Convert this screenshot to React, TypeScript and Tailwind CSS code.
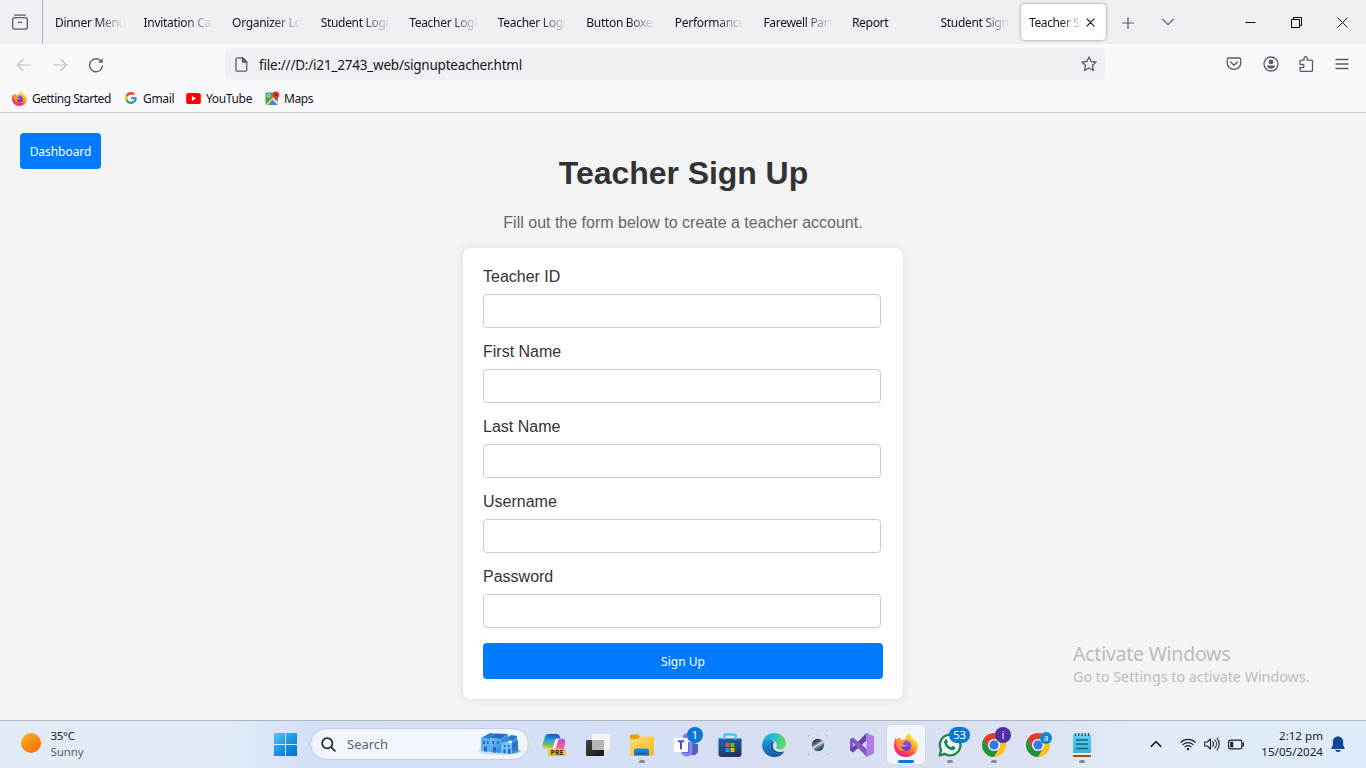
import React from "react";

const TABS = [
  "Dinner Menu",
  "Invitation Card",
  "Organizer Login",
  "Student Login",
  "Teacher Login",
  "Teacher Login",
  "Button Boxes",
  "Performance",
  "Farewell Party",
  "Report",
  "Student Sign Up",
];

const FIELDS = ["Teacher ID", "First Name", "Last Name", "Username", "Password"];

const fade = "[mask-image:linear-gradient(to_right,black_60%,transparent)]";

function FirefoxIcon({ className, id }: { className: string; id: string }) {
  return (
    <svg viewBox="0 0 24 24" className={className}>
      <defs>
        <linearGradient id={`${id}a`} x1="0.85" y1="0.1" x2="0.2" y2="0.95">
          <stop offset="0" stopColor="#fff44f" />
          <stop offset="0.35" stopColor="#ffb01f" />
          <stop offset="0.6" stopColor="#ff5a36" />
          <stop offset="1" stopColor="#f0149a" />
        </linearGradient>
        <linearGradient id={`${id}b`} x1="0.6" y1="0" x2="0.4" y2="1">
          <stop offset="0" stopColor="#a254e8" />
          <stop offset="1" stopColor="#4f3ec8" />
        </linearGradient>
      </defs>
      <path
        d="M22.6 8.6c-.5-1.2-1.500-2.500-2.300-2.900.6 1.200 1 2.500 1.100 3.400C20.100 5.900 17.900 4.600 16.100 1.800 15.600 1 15.200.4 15.100.1c-2.800 1.600-3.800 4.700-3.900 6.200-1.300.1-2.600.6-3.600 1.300C6 6.700 6 4.600 6 4.300 4.600 5 3.400 6.100 2.700 7c-.5-.6-.5-2.700-.4-3.100C1.500 4.500.7 6.900.4 9.600.1 10.700 0 11.900 0 12.900 0 19 5.300 24 11.900 24 18 24 23.100 19.700 23.900 13.900c.2-2-.3-3.900-1.300-5.300z"
        fill={`url(#${id}a)`}
      />
      <circle cx="12.200" cy="12.600" r="5.300" fill={`url(#${id}b)`} />
      <path
        d="M2.500 7.500c2.100-1.200 3.700-.9 4.800.1 1.200-.2 2.700 0 3.800.8-.2 1.200-1.700 1.700-2.900 2.200.1.700 1.200 1.300 2.400 1.500.9.100 1.700-.2 2.400 0-.6 1-2 1.700-3.300 1.700-1.200.1-2.300-.3-3.200-1 .4 2.600 2.400 4.600 5.300 5-5 1.300-10-3-9.300-10.300z"
        fill="#ff9a2e"
      />
    </svg>
  );
}

function GoogleIcon() {
  return (
    <svg viewBox="0 0 48 48" className="h-3 w-3">
      <path fill="#EA4335" d="M24 9.500c3.540 0 6.710 1.220 9.210 3.600l6.850-6.850C35.900 2.380 30.470 0 24 0 14.620 0 6.510 5.380 2.560 13.220l7.980 6.190C12.430 13.720 17.740 9.500 24 9.500z" />
      <path fill="#4285F4" d="M46.980 24.550c0-1.570-.15-3.090-.38-4.550H24v9.020h12.940c-.58 2.960-2.260 5.480-4.780 7.180l7.730 6c4.510-4.180 7.090-10.360 7.090-17.650z" />
      <path fill="#FBBC05" d="M10.530 28.590c-.48-1.450-.76-2.990-.76-4.590s.27-3.140.76-4.590l-7.980-6.190C.92 16.460 0 20.120 0 24c0 3.880.92 7.540 2.560 10.780l7.970-6.190z" />
      <path fill="#34A853" d="M24 48c6.480 0 11.930-2.130 15.890-5.810l-7.730-6c-2.150 1.450-4.920 2.300-8.160 2.300-6.260 0-11.570-4.220-13.470-9.910l-7.980 6.190C6.510 42.620 14.620 48 24 48z" />
    </svg>
  );
}

function MapsIcon() {
  return (
    <svg viewBox="0 0 15 15" className="h-[15px] w-[15px]">
      <path d="M1.500 1.500H13V13a1 1 0 0 1-1 1H1.500a1 1 0 0 1-1-1V2.500a1 1 0 0 1 1-1z" fill="#3f9f5b" />
      <path d="M5.500 9.300L8.500 6.300 13 10.800V13.500L12.500 14H3z" fill="#dfe3e8" />
      <path d="M7.300 8.500l5.400 5.500H2.500z" fill="#4285f4" />
      <path d="M0.600 13.200L9.300 4.500l1.400 1.400L2.600 14H1.400z" fill="#fbc934" />
      <circle cx="3.700" cy="4.700" r="1.600" fill="none" stroke="#dff1e3" strokeWidth="1" />
      <path d="M11 10.200C10.700 7.700 7.700 6.600 7.700 3.700a3.300 3.300 0 0 1 6.600 0C14.300 6.600 11.300 7.700 11 10.200z" fill="#dc3b30" />
      <circle cx="11" cy="3.700" r="1.200" fill="#7d1a14" />
    </svg>
  );
}

function TabStrip() {
  return (
    <div className="flex h-11 bg-[#f0eff4] text-[12px] tracking-[-0.300px] text-[#15141a]">
      <div className="flex w-[43px] items-center justify-center border-r border-[#aeadb4] pr-[2px]">
        <svg viewBox="0 0 16 16" className="h-4 w-4" fill="none" stroke="#5b5b66" strokeWidth="1.300" strokeLinecap="round">
          <path d="M2.700 1.100h10.600" />
          <rect x="0.700" y="3.700" width="14.600" height="11.500" rx="2" />
          <path d="M6.300 8.300h3.400" />
        </svg>
      </div>
      <div className="flex w-[1063px] gap-[3.560px] pl-1">
        {TABS.map((t, i) => (
          <div key={i} className="flex w-[85px] shrink-0 items-center px-2 pt-[2px]">
            <span className={`block w-[69px] overflow-hidden whitespace-nowrap ${t === "Report" ? "" : fade}`}>{t}</span>
          </div>
        ))}
        <div className="my-1 flex w-[85px] shrink-0 items-center rounded bg-white pl-2 shadow-[0_0_3px_rgba(0,0,0,0.45)]">
          <span className={`block w-[53px] overflow-hidden whitespace-nowrap pt-[2px] tracking-[-0.400px] ${fade}`}>Teacher Sign Up</span>
          <svg viewBox="0 0 10 10" className="ml-[4px] h-[9px] w-[9px]" stroke="#15141a" strokeWidth="1.200" strokeLinecap="round">
            <path d="M1 1l8 8M9 1l-8 8" />
          </svg>
        </div>
      </div>
      <div className="flex flex-1 items-center text-[#5b5b66]">
        <svg viewBox="0 0 12 12" className="ml-[15.500px] mt-px h-3 w-3" stroke="currentColor" strokeWidth="1.200" strokeLinecap="round">
          <path d="M6 .6v10.800M.6 6h10.800" />
        </svg>
        <svg viewBox="0 0 12 8" className="ml-[28.500px] h-2 w-3" fill="none" stroke="currentColor" strokeWidth="1.200" strokeLinecap="round" strokeLinejoin="round">
          <path d="M.6 1.200L6 6.600l5.400-5.400" />
        </svg>
        <svg viewBox="0 0 11 11" className="ml-[71px] h-[11px] w-[11px]" stroke="#000" strokeWidth="1">
          <path d="M.5 5.500h10" />
        </svg>
        <svg viewBox="0 0 11 11" className="ml-[35px] h-[11px] w-[11px]" fill="none" stroke="#000" strokeWidth="1">
          <path d="M.5 2.500h8v8h-8zM2.500 2.500v-2h8v8h-2" />
        </svg>
        <svg viewBox="0 0 11 11" className="ml-[35px] h-[11px] w-[11px]" stroke="#000" strokeWidth="0.900">
          <path d="M.5 .5l10 10M10.500 .5l-10 10" />
        </svg>
      </div>
    </div>
  );
}

function NavBar() {
  return (
    <div className="flex h-10 items-center bg-[#f9f9fb] text-[#5b5b66]">
      <svg viewBox="0 0 16 16" className="mb-[-1px] ml-4 h-4 w-4" fill="none" stroke="#bfbfc5" strokeWidth="1.200" strokeLinecap="round" strokeLinejoin="round">
        <path d="M14.500 8H1.500M7 2.500L1.500 8 7 13.500" />
      </svg>
      <svg viewBox="0 0 16 16" className="mb-[-1px] ml-5 h-4 w-4" fill="none" stroke="#bfbfc5" strokeWidth="1.200" strokeLinecap="round" strokeLinejoin="round">
        <path d="M1.500 8h13M9 2.500L14.500 8 9 13.500" />
      </svg>
      <svg viewBox="0 0 16 16" className="mb-[-1px] ml-5 h-4 w-4" fill="none" stroke="currentColor" strokeWidth="1.300" strokeLinecap="round">
        <path d="M13.200 4.300A6.500 6.500 0 1 0 14.500 8.800" />
        <path d="M14.700 1.200v4.600h-4.600z" fill="currentColor" stroke="none" />
      </svg>
      <div className="ml-[121px] flex h-8 w-[880px] items-center rounded bg-[#f0eff4]">
        <svg viewBox="0 0 13 15" className="ml-[10px] h-[15px] w-[13px]" fill="none" stroke="currentColor" strokeWidth="1.300" strokeLinejoin="round">
          <path d="M2.500 .8h5l4.200 4.200v7.700a1.500 1.500 0 0 1-1.500 1.500H2.500A1.500 1.500 0 0 1 1 12.700V2.300A1.500 1.500 0 0 1 2.500 .8z" />
          <path d="M7.500 .8V5h4.200z" fill="currentColor" />
        </svg>
        <span className="ml-[11px] flex-1 whitespace-nowrap pt-[2px] text-[13.500px] tracking-[-0.210px] text-[#15141a]">file:///D:/i21_2743_web/signupteacher.html</span>
        <svg viewBox="0 0 16 16" className="mr-2 h-4 w-4" fill="none" stroke="currentColor" strokeWidth="1.300" strokeLinejoin="round">
          <path d="M8 .9l2.100 4.600 5 .6-3.700 3.400 1 5L8 12l-4.400 2.500 1-5L.9 6.100l5-.6z" />
        </svg>
      </div>
      <svg viewBox="0 0 16 16" className="ml-[121px] h-4 w-4" fill="none" stroke="currentColor" strokeWidth="1.300" strokeLinecap="round" strokeLinejoin="round">
        <path d="M2.600 2h10.800a1.300 1.300 0 0 1 1.300 1.300v3.900a6.700 6.200 0 0 1-13.400 0V3.300A1.300 1.300 0 0 1 2.600 2z" />
        <path d="M4.700 6L8 9.200 11.300 6" />
      </svg>
      <svg viewBox="0 0 16 16" className="ml-[20.500px] h-4 w-4" fill="none" stroke="currentColor" strokeWidth="1.300">
        <circle cx="8" cy="8" r="7" />
        <circle cx="8" cy="5.900" r="2.400" fill="currentColor" stroke="none" />
        <path d="M3.900 9.500h8.200c-.3 2-1.800 3.300-4.100 3.300s-3.800-1.300-4.100-3.300z" fill="currentColor" stroke="none" />
      </svg>
      <svg viewBox="0 0 16 16" className="ml-[19.500px] h-4 w-4" fill="none" stroke="currentColor" strokeWidth="1.300" strokeLinejoin="round">
        <path d="M2 5.200a1 1 0 0 1 1-1h3V2.300a1.600 1.600 0 0 1 3.200 0v1.900H13.500a1 1 0 0 1 1 1v9.200a1 1 0 0 1-1 1H3a1 1 0 0 1-1-1v-2.700h2.400a1.500 1.500 0 0 0 0-3.200H2z" />
      </svg>
      <svg viewBox="0 0 16 16" className="ml-[20px] h-4 w-4" stroke="currentColor" strokeWidth="1.300" strokeLinecap="round">
        <path d="M2 3.500h12M2 8h12M2 12.500h12" />
      </svg>
    </div>
  );
}

function Bookmarks() {
  return (
    <div className="flex h-[29px] items-center border-b border-[#cccccc] bg-[#f9f9fb] pl-3 text-[12px] tracking-[-0.350px] text-[#15141a]">
      <FirefoxIcon id="bm" className="h-[15px] w-[15px]" />
      <span className="ml-[5px] w-[80px] whitespace-nowrap pt-[2px] tracking-[-0.500px]">Getting Started</span>
      <span className="ml-[13px]"><GoogleIcon /></span>
      <span className="ml-[6px] w-[31px] whitespace-nowrap pt-[2px]">Gmail</span>
      <svg viewBox="0 0 16 12" className="ml-[12px] h-[11px] w-[15px]">
        <rect width="16" height="12" rx="2.800" fill="#f00" />
        <path d="M6.200 3.300v5.400L11 6z" fill="#fff" />
      </svg>
      <span className="ml-[5px] w-[46px] whitespace-nowrap pt-[2px]">YouTube</span>
      <span className="ml-[13px]"><MapsIcon /></span>
      <span className="ml-[4px] pt-[2px] tracking-[-0.450px]">Maps</span>
    </div>
  );
}

function Page() {
  return (
    <div className="relative flex h-[607px] flex-col items-center bg-[#f4f4f4] font-['Liberation_Sans',Arial,sans-serif]">
      <button className="absolute left-5 top-5 h-9 w-[81px] rounded bg-[#007bff] pt-[2px] font-['Noto_Sans',sans-serif] text-[12px] tracking-[-0.050px] text-white">Dashboard</button>
      <h1 className="mt-[42px] pl-px text-[32px] leading-[37px] font-bold tracking-[-0.050px] text-[#333]">Teacher Sign Up</h1>
      <p className="mt-[22px] text-base leading-[18px] text-[#666]">Fill out the form below to create a teacher account.</p>
      <form className="mt-[16px] w-[440px] rounded-lg bg-white p-5 shadow-[0_0_10px_rgba(0,0,0,0.1)]">
        {FIELDS.map((f) => (
          <div key={f} className="mb-[15px]">
            <label className="mb-2 block text-base leading-[18px] text-[#333]">{f}</label>
            <input className="block h-[34px] w-[398px] rounded border border-[#ccc] bg-white" />
          </div>
        ))}
        <button className="block h-9 w-full rounded bg-[#007bff] pt-[2px] font-['Noto_Sans',sans-serif] text-[12px] text-white">Sign Up</button>
      </form>
      <div className="absolute left-[1073px] top-[527px] whitespace-nowrap font-['Noto_Sans',sans-serif] text-[#bcbcbc]">
        <div className="text-[19.500px] leading-[27px] tracking-[-0.240px]">Activate Windows</div>
        <div className="text-[14.300px] leading-[19px] tracking-[-0.010px]">Go to Settings to activate Windows.</div>
      </div>
    </div>
  );
}

function Cell({ children, active, dot }: { children: React.ReactNode; active?: boolean; dot?: boolean }) {
  return (
    <div className="relative flex h-12 w-11 shrink-0 items-center justify-center pt-px">
      <div className={`flex h-[39px] w-[38px] items-center justify-center rounded ${active ? "bg-[#f2f5fc] shadow-[0_0_1px_rgba(0,0,0,0.2)]" : ""}`}>{children}</div>
      {active && <span className="absolute bottom-[5px] left-[14px] h-[3px] w-4 rounded-full bg-[#0878d4]" />}
      {dot && <span className="absolute bottom-[5px] left-[19px] h-[3px] w-[6px] rounded-full bg-[#858990]" />}
    </div>
  );
}

function Badge({ children, className }: { children: React.ReactNode; className: string }) {
  return <span className={`absolute flex items-center justify-center rounded-full text-white ${className}`}>{children}</span>;
}

function ChromeIcon() {
  return (
    <svg viewBox="0 0 24 24" className="h-6 w-6">
      <circle cx="12" cy="12" r="12" fill="#fcc31e" />
      <path d="M1.608 6A12 12 0 0 1 22.392 6L12 6 6.804 15z" fill="#e33b2e" />
      <path d="M1.608 6A12 12 0 0 0 12 24L17.196 15 12 18 6.804 15z" fill="#229342" />
      <circle cx="12" cy="12" r="6" fill="#fff" />
      <circle cx="12" cy="12" r="4.700" fill="#3478ec" />
    </svg>
  );
}

function CopilotIcon() {
  return (
    <svg viewBox="0 0 24 24" className="h-6 w-6">
      <defs>
        <linearGradient id="cpa" x1="0.500" y1="0" x2="0.300" y2="1">
          <stop offset="0" stopColor="#1757c8" />
          <stop offset="0.450" stopColor="#23a8d8" />
          <stop offset="0.750" stopColor="#6cc25a" />
          <stop offset="1" stopColor="#f2ce20" />
        </linearGradient>
        <linearGradient id="cpb" x1="0.700" y1="0" x2="0.300" y2="1">
          <stop offset="0" stopColor="#a858e8" />
          <stop offset="0.500" stopColor="#e9589a" />
          <stop offset="1" stopColor="#fb8450" />
        </linearGradient>
      </defs>
      <path d="M6.500 1h8.200c1.800 0 2.700 1.300 3.200 3l.5 1.700h-3.300c-1.900 0-2.700 1.300-3.200 3L10 15.500H3.600C.8 15.500 0 13.200.7 10.700L3 3.700C3.600 1.900 4.700 1 6.500 1z" fill="url(#cpa)" />
      <path d="M15.500 5.700h4.700c2.800 0 3.600 2.100 2.900 4.500L21.500 17H9.500l2.900-8.900c.6-1.600 1.400-2.400 3.100-2.400z" fill="url(#cpb)" />
      <path d="M13.300 7l-3 9h3.300l2.600-8.400c.3-1 .8-1.500 1.600-1.900h-2.500c-1 0-1.700.4-2 1.300z" fill="#f6eafd" />
    </svg>
  );
}

function SearchArt() {
  return (
    <svg viewBox="0 0 44 24" className="h-6 w-11">
      <defs>
        <linearGradient id="sa" x1="0" y1="0" x2="1" y2="1">
          <stop offset="0" stopColor="#7cc6ff" />
          <stop offset="1" stopColor="#2f85dc" />
        </linearGradient>
      </defs>
      <ellipse cx="22" cy="19" rx="21.500" ry="3.800" fill="#c3dcf5" />
      <path d="M3 6l9 1v13l-9-1.500z" fill="#5fb0f4" />
      <path d="M3 6l9-5 8 1-8 5z" fill="#2f7fd0" />
      <path d="M12 6l11 1v14l-11-1z" fill="url(#sa)" />
      <path d="M12 6l6-4.500L30 2l-7 5z" fill="#2770c2" />
      <path d="M23 7l7-5v8l-7 3z" fill="#3a8fe4" />
      <path d="M30 9V5.500l9-1.500v13l-5 3V9z" fill="#4595e6" />
      <path d="M29 6l4-3 6 1-4 4z" fill="#2a74c6" />
      <path d="M23 11l4-1 7 1v11l-11-1z" fill="#78c0fa" />
      <path d="M34 11l6-3v11l-6 3z" fill="#2d78cc" />
      <path d="M5 9h2v3H5zM9 9h1.500v3H9zM14.500 9h1.500v3h-1.500zM19 9h1.500v3H19zM26 13h1.500v2H26zM30 13h1.500v2H30zM36 12h1.500v3H36z" fill="#1f66b4" />
      <path d="M6 14.500h3v5H6zM15 15h3v5.500h-3zM25.500 17h2v4.500h-2zM30 16.500h2.500V22H30z" fill="#276fbf" />
      <path d="M34 20.500l2-2.500 2 1.500 2-2 1.500 2-3.500 2z" fill="#4c9fbd" />
    </svg>
  );
}

function Taskbar() {
  return (
    <div className="flex h-12 bg-[linear-gradient(90deg,#e1ecf6_0%,#e0ebf7_17%,#d2e0f8_23%,#d5dff6_45%,#d8dff2_62%,#dce2f1_76%,#e2ecf8_84%,#dfebf9_100%)] font-['Noto_Sans',sans-serif] text-[#1f2124] shadow-[inset_0_1px_0_#adb4be]">
      <div className="flex w-[263px] items-center pl-[21px]">
        <span className="mb-[2px] h-5 w-5 rounded-full bg-[linear-gradient(140deg,#f4bd2a,#f5780a_75%)]" />
        <div className="ml-[9.500px] text-[11.500px] leading-4">
          <div className="tracking-[-0.300px]">35°C</div>
          <div className="tracking-[-0.100px] text-[#5d6268]">Sunny</div>
        </div>
      </div>
      <Cell>
        <svg viewBox="0 0 23 23" className="h-[23px] w-[23px]">
          <defs>
            <linearGradient id="win" gradientUnits="userSpaceOnUse" x1="0" y1="0" x2="20" y2="23">
              <stop offset="0" stopColor="#4ccbfa" />
              <stop offset="0.600" stopColor="#1490df" />
              <stop offset="1" stopColor="#0473d0" />
            </linearGradient>
          </defs>
          <path d="M0 0h11v11H0zM12 0h11v11H12zM0 12h11v11H0zM12 12h11v11H12z" fill="url(#win)" />
        </svg>
      </Cell>
      <div className="mt-2 ml-[3px] flex h-8 w-[219px] items-center rounded-full border border-[#c0cde2] bg-[#f1f6fe] pl-[10px]">
        <svg viewBox="0 0 16 16" className="h-[15px] w-[15px]" fill="none" stroke="#24272b" strokeWidth="1.800" strokeLinecap="round">
          <circle cx="6.700" cy="6.700" r="5.500" />
          <path d="M10.800 10.800l4 4" />
        </svg>
        <span className="ml-[11px] flex-1 pt-px text-[13px] text-[#5c6066]">Search</span>
        <span className="mr-[6px]"><SearchArt /></span>
      </div>
      <div className="ml-[3px] flex">
        <Cell>
          <CopilotIcon />
          <span className="absolute left-[16px] top-[29px] flex h-[7px] w-[18px] items-center justify-center rounded-[1px] bg-[#f7c60c] text-[7px] leading-none font-bold text-[#241f10]">PRE</span>
        </Cell>
        <Cell>
          <svg viewBox="0 0 24 24" className="h-6 w-6">
            <defs>
              <linearGradient id="tva" x1="0" y1="0" x2="1" y2="1">
                <stop offset="0" stopColor="#454545" />
                <stop offset="1" stopColor="#161616" />
              </linearGradient>
            </defs>
            <rect x="0" y="7" width="18" height="16" rx="1" fill="url(#tva)" />
            <rect x="6" y="1" width="18" height="16" rx="1" fill="#f4f4f4" />
            <rect x="6" y="7" width="12" height="10" fill="#b5b5b5" />
          </svg>
        </Cell>
        <Cell dot>
          <svg viewBox="0 0 24 24" className="h-6 w-6">
            <defs>
              <linearGradient id="fea" x1="0" y1="0" x2="1" y2="1">
                <stop offset="0" stopColor="#ffdf78" />
                <stop offset="1" stopColor="#fbb51c" />
              </linearGradient>
              <linearGradient id="feb" x1="0" y1="0" x2="0" y2="1">
                <stop offset="0" stopColor="#1b93dc" />
                <stop offset="1" stopColor="#1366b4" />
              </linearGradient>
            </defs>
            <path d="M0 2.500A1 1 0 0 1 1 1.500h7.500l1.500 2V9H0z" fill="#e0a011" />
            <path d="M0 6h8l2-2.500h13a1 1 0 0 1 1 1v17a1 1 0 0 1-1 1H1a1 1 0 0 1-1-1z" fill="url(#fea)" />
            <path d="M4 22.500v-4.800c0-1.500.8-2.200 2.200-2.200h10.600c1.400 0 2.200.7 2.200 2.200v4.800z" fill="url(#feb)" />
            <path d="M7 20h9v1H7z" fill="#0f5a9e" />
          </svg>
        </Cell>
        <Cell>
          <svg viewBox="0 0 24 24" className="h-6 w-6">
            <circle cx="20" cy="8" r="3" fill="#5059c9" />
            <path d="M16 11h8v6.500a4.500 4.500 0 0 1-8 3z" fill="#525bc8" />
            <circle cx="12.500" cy="4" r="3.600" fill="#7b83eb" />
            <path d="M7 9h11.500v8.500c0 3.500-2.300 6-5.800 6S7 21 7 18z" fill="#7f86e6" />
            <path d="M9 10h6v10H9z" fill="#5f68cc" />
            <rect x="0" y="5" width="14" height="14" rx="1" fill="#fff" />
            <path d="M3.800 8.200h6.400M7 8.200v8" stroke="#4950b5" strokeWidth="2" fill="none" />
          </svg>
          <Badge className="left-[23px] top-[7px] h-4 w-4 bg-[#0878d4] text-[11px]">1</Badge>
        </Cell>
        <Cell>
          <svg viewBox="0 0 24 24" className="h-6 w-6">
            <defs>
              <linearGradient id="sto" x1="0" y1="0" x2="0.400" y2="1">
                <stop offset="0" stopColor="#1268ae" />
                <stop offset="1" stopColor="#233562" />
              </linearGradient>
            </defs>
            <path d="M.5 5.500h23V21a3 3 0 0 1-3 3h-17a3 3 0 0 1-3-3z" fill="url(#sto)" />
            <path d="M6.300 7V2.500a1 1 0 0 1 1-1h9.400a1 1 0 0 1 1 1V7" fill="none" stroke="#38bdec" strokeWidth="1.800" />
            <path d="M7.500 10h4v4h-4z" fill="#f25022" />
            <path d="M12.500 10h4v4h-4z" fill="#7fba00" />
            <path d="M7.500 15h4v4h-4z" fill="#00a4ef" />
            <path d="M12.500 15h4v4h-4z" fill="#ffb900" />
          </svg>
        </Cell>
        <Cell>
          <svg viewBox="0 0 24 24" className="h-6 w-6">
            <defs>
              <linearGradient id="ea" x1="0" y1="0.300" x2="1" y2="0.500">
                <stop offset="0" stopColor="#1e9de0" />
                <stop offset="0.500" stopColor="#2cc4d2" />
                <stop offset="1" stopColor="#66dc50" />
              </linearGradient>
              <linearGradient id="eb" x1="0.200" y1="0" x2="0.700" y2="1">
                <stop offset="0" stopColor="#1c90d8" />
                <stop offset="1" stopColor="#1255a2" />
              </linearGradient>
            </defs>
            <path d="M.2 11C.9 4.700 5.700 0 12 0c7 0 12 5 12 10.400 0 3.600-2.800 5.800-6.100 5.800-2.300 0-4-.7-4-1.500 0-.6.900-1 .9-2.700 0-2.600-2.700-4.700-6.300-4.700C4.700 7.300 1.500 9 .2 11z" fill="url(#ea)" />
            <path d="M.2 11c1.200-2.300 4-3.900 7.200-3.900 1.700 0 3.200.5 4.400 1.200-2.200.8-3.300 2.500-3.300 4.800 0 4.200 3.900 7.300 8.300 7.300 2 0 3.700-.6 5-1.200C19.600 22.500 16.300 24 12.300 24 5.300 24-.500 18.500.2 11z" fill="url(#eb)" />
            <path d="M11.800 8.300c-2.200.8-3.300 2.500-3.300 4.800 0 4.200 3.900 7.300 8.300 7.300 2 0 3.700-.6 5-1.200.5-.3.300-.9-.2-.7-1.300.5-2.300.5-3.700.5-4.700 0-7.200-3.200-7.200-6 0-2 1.100-3 1.100-4.700z" fill="#114a91" />
          </svg>
        </Cell>
        <Cell>
          <svg viewBox="0 0 24 24" className="h-6 w-6">
            <defs>
              <linearGradient id="gl" x1="0.200" y1="0" x2="0.800" y2="1">
                <stop offset="0" stopColor="#202326" />
                <stop offset="0.350" stopColor="#5c6a73" />
                <stop offset="0.480" stopColor="#d5dfe6" />
                <stop offset="0.650" stopColor="#54789a" />
                <stop offset="1" stopColor="#22252a" />
              </linearGradient>
            </defs>
            <circle cx="12" cy="12" r="6.200" fill="url(#gl)" />
            <path d="M2.500 4V2.500H4M20 2.500h1.500V4M2.500 20v1.500H4M21.500 20v1.500H20M11.500 2.500h1M11.500 21.500h1" fill="none" stroke="#efb75a" strokeWidth="1" />
          </svg>
        </Cell>
        <Cell>
          <svg viewBox="0 0 24 24" className="h-6 w-6">
            <path d="M16.500 0v7.500L3 19.500 0 17 16.500 0z" fill="#6b3fa8" />
            <path d="M0 6l3-1.500L17 16v8L6 13 3 9.500V15l-3 2z" fill="#8658c8" />
            <path d="M0 15l3-1v5.500L0 17z" fill="#6b3fa8" />
            <path d="M16.500 0L24 3.300v17.200L16.500 24z" fill="#b17be8" />
          </svg>
        </Cell>
        <Cell active>
          <FirefoxIcon id="tb" className="h-6 w-6" />
        </Cell>
        <Cell dot>
          <svg viewBox="0 0 24 24" className="h-6 w-6">
            <path d="M1.600 22.400l1.500-5.500A10.300 10.300 0 1 1 7 20.900z" fill="#eef8f2" stroke="#168653" strokeWidth="2.300" strokeLinejoin="round" />
            <path d="M8.200 6.300c.6 0 .8.200 1 .7l.7 1.700c.1.400 0 .7-.9 1.700.9 1.900 2.300 3.100 4.200 3.900.8-1 1.100-1.300 1.500-1.200l2.100 1c.4.200.5.500.4 1-.3 1.500-1.700 2.300-3 2.200-4-.4-7.700-4.400-8.100-7.700-.1-1.500.9-3.200 2.100-3.300z" fill="#168653" />
          </svg>
          <Badge className="left-[21px] top-[7px] h-4 w-[21px] bg-[#0878d4] text-[11.500px] tracking-[-0.300px]">53</Badge>
        </Cell>
        <Cell dot>
          <ChromeIcon />
          <Badge className="left-[23px] top-[7px] h-4 w-4 bg-[#512da8] text-[10px]">i</Badge>
        </Cell>
        <Cell>
          <ChromeIcon />
          <Badge className="left-[24px] top-[12px] h-3 w-3 bg-[#0b87d0] text-[8px] leading-none">a</Badge>
        </Cell>
        <Cell dot>
          <svg viewBox="0 0 24 24" className="h-6 w-6">
            <defs>
              <linearGradient id="np" x1="0" y1="0" x2="0" y2="1">
                <stop offset="0" stopColor="#62d0ee" />
                <stop offset="1" stopColor="#38b4dc" />
              </linearGradient>
            </defs>
            <rect x="3" y="20" width="18" height="4" rx="1" fill="#9a4e0c" />
            <rect x="3" y="19" width="18" height="3" fill="#f4f1ea" />
            <rect x="3" y="1.500" width="18" height="18.500" rx="1" fill="url(#np)" />
            <path d="M5.500 0v3M8.750 0v3M12 0v3M15.250 0v3M18.500 0v3" stroke="#10647c" strokeWidth="1.300" />
            <path d="M6 7h12M6 11h12M6 15.500h12" stroke="#0c6580" strokeWidth="1.500" />
          </svg>
        </Cell>
      </div>
      <div className="flex flex-1 items-center">
        <svg viewBox="0 0 12 8" className="ml-[46px] h-2 w-3" fill="none" stroke="#222" strokeWidth="1.500" strokeLinecap="round" strokeLinejoin="round">
          <path d="M1.200 6.400L6 1.600l4.800 4.800" />
        </svg>
        <svg viewBox="0 0 16 13" className="ml-[18px] h-[13px] w-4" fill="none" stroke="#222" strokeWidth="1.200" strokeLinecap="round">
          <path d="M.8 4.400a10.200 10.200 0 0 1 14.400 0M2.900 6.700a7.200 7.200 0 0 1 10.200 0M5 8.900a4.200 4.200 0 0 1 6 0" />
          <circle cx="8" cy="11" r="1.300" fill="#222" stroke="none" />
        </svg>
        <svg viewBox="0 0 16 14" className="ml-[8px] h-[14px] w-4" fill="none" stroke="#222" strokeWidth="1.100" strokeLinecap="round" strokeLinejoin="round">
          <path d="M.7 5h2.500l3.300-3v10L3.200 9H.7zM8.700 4.800a3.500 3.500 0 0 1 0 4.400M10.900 3a6 6 0 0 1 0 8M13.100 1.400a8.500 8.500 0 0 1 0 11.200" />
        </svg>
        <svg viewBox="0 0 17 11" className="ml-[8px] h-[11px] w-[17px]" fill="none" stroke="#222" strokeWidth="1.200">
          <rect x="0.600" y="1.100" width="13.300" height="8.800" rx="1.800" />
          <path d="M2.200 2.700h3v5.600h-3z" fill="#222" stroke="none" />
          <path d="M15.200 4v3" strokeWidth="1.600" strokeLinecap="round" />
        </svg>
        <div className="ml-[16px] w-[62px] text-right text-[11.600px] leading-4 whitespace-nowrap">
          <div>2:12 pm</div>
          <div>15/05/2024</div>
        </div>
        <svg viewBox="0 0 14 16" className="ml-[8px] h-4 w-[14px]" fill="#0b4698">
          <path d="M7 .6c3.200 0 5.200 2.300 5.200 5.200v3.400l1.500 3c.2.500 0 .8-.5.800H.8c-.5 0-.7-.3-.5-.8l1.500-3V5.800C1.800 2.900 3.800.6 7 .6zM4.300 13.900h5.400A2.700 2 0 0 1 4.300 13.900z" />
        </svg>
      </div>
    </div>
  );
}

export default function App() {
  return (
    <div className="flex h-[768px] w-[1366px] flex-col overflow-hidden font-['Noto_Sans',sans-serif]">
      <TabStrip />
      <NavBar />
      <Bookmarks />
      <Page />
      <Taskbar />
    </div>
  );
}
